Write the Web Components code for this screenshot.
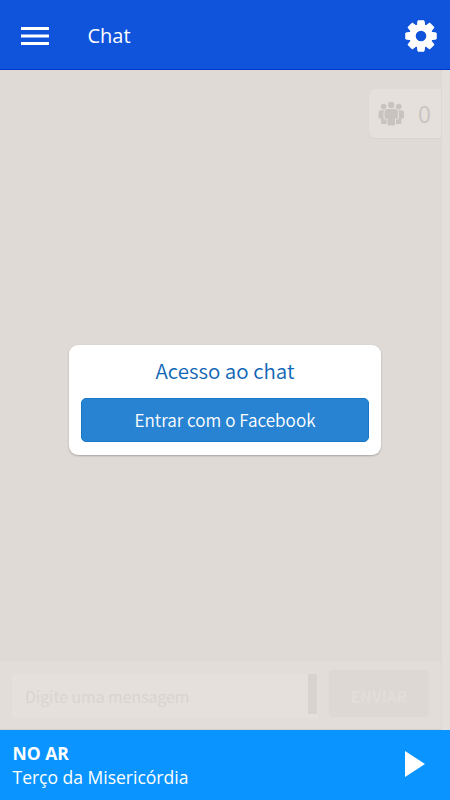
<!DOCTYPE html>
<html lang="pt-BR">

<head>
  <meta charset="UTF-8">
  <meta name="viewport" content="width=device-width, initial-scale=1.0">
  <title>Chat</title>
  <style>
    body {
      margin: 0;
      font-family: "Open Sans", sans-serif;
    }
  </style>
</head>

<body>
  <radio-app>
    <app-header slot="header">Chat</app-header>
    <chat-room slot="main">
      <online-count slot="count">0</online-count>
      <message-bar slot="bar" placeholder="Digite uma mensagem">ENVIAR</message-bar>
      <login-card slot="dialog" heading="Acesso ao chat">Entrar com o Facebook</login-card>
    </chat-room>
    <now-playing slot="footer" label="NO AR">Terço da Misericórdia</now-playing>
  </radio-app>

  <script>
    class BaseElement extends HTMLElement {
      constructor() {
        super();
        this.attachShadow({ mode: 'open' });
      }
      connectedCallback() {
        this.shadowRoot.innerHTML = `<style>${this.constructor.style}</style>${this.render()}`;
      }
    }

    class RadioApp extends BaseElement {
      static style = `
        :host {
          display: flex;
          flex-direction: column;
          height: 100vh;
          overflow: hidden;
        }
      `;
      render() {
        return `
          <slot name="header"></slot>
          <slot name="main"></slot>
          <slot name="footer"></slot>
        `;
      }
    }

    class AppHeader extends BaseElement {
      static style = `
        :host {
          display: flex;
          align-items: center;
          flex: none;
          box-sizing: border-box;
          height: 70px;
          padding: 2px 13px 0 21px;
          background: #0f54db;
          border-bottom: 1px solid #0034cf;
          color: #fff;
        }
        .menu {
          display: block;
          width: 28px;
          height: 20px;
        }
        .title {
          flex: 1;
          margin-left: 38.5px;
          font-size: 20px;
          line-height: 28px;
        }
        .gear {
          display: block;
          width: 32px;
          height: 32px;
        }
      `;
      gear() {
        // eight teeth around one ring
        let teeth = '';
        for (let i = 0; i < 8; i++) {
          teeth += `<path d="M-3-15.200h6l.8 5.700h-7.600z" transform="rotate(${i * 45})"/>`;
        }
        return `
          <svg class="gear" viewBox="-16 -16 32 32" fill="#fff" stroke="#fff" stroke-linejoin="round">
            ${teeth}
            <circle r="8.500" fill="none" stroke-width="6.400"/>
          </svg>
        `;
      }
      render() {
        return `
          <svg class="menu" viewBox="0 0 28 20" fill="#fff">
            <path d="M0 1h28v3H0zM0 8.500h28v3H0zM0 16h28v3H0z"/>
          </svg>
          <div class="title"><slot></slot></div>
          ${this.gear()}
        `;
      }
    }

    class ChatRoom extends BaseElement {
      static style = `
        :host {
          position: relative;
          display: flex;
          flex: 1;
          min-height: 0;
          background: #dfdad6;
          font-family: "Noto Sans CJK SC", sans-serif;
        }
        .room {
          display: flex;
          flex: 1;
          flex-direction: column;
          justify-content: space-between;
          align-items: flex-end;
          padding-top: 19px;
        }
        .track {
          width: 8px;
          border-left: 1px solid #ddd8d5;
          background: #e4dfdb;
        }
        .overlay {
          position: absolute;
          inset: 0;
          display: flex;
          align-items: center;
          justify-content: center;
        }
      `;
      render() {
        return `
          <div class="room">
            <slot name="count"></slot>
            <slot name="bar"></slot>
          </div>
          <div class="track"></div>
          <div class="overlay"><slot name="dialog"></slot></div>
        `;
      }
    }

    class OnlineCount extends BaseElement {
      static style = `
        :host {
          display: flex;
          align-items: center;
          box-sizing: border-box;
          width: 72px;
          height: 49px;
          padding-left: 9px;
          background: #e5e0dc;
          border-radius: 6px 0 0 6px;
          box-shadow: 0 1px 1px #d8d3cf;
          color: #c8c3bf;
          font-size: 23.5px;
          font-weight: 350;
          line-height: 47px;
        }
        svg {
          width: 27px;
          height: 26px;
          margin-right: 13px;
        }
        .value {
          margin-top: -1px;
        }
      `;
      render() {
        return `
          <svg viewBox="0 0 27 26" fill="#c8c3bf">
            <circle cx="13.200" cy="4" r="3.200"/>
            <circle cx="5.700" cy="5.600" r="2.800"/>
            <circle cx="20.700" cy="5.600" r="2.800"/>
            <path d="M9.500 8H17q3 0 3 3v5.500q0 1.200-1.500 1.200h-1.500V23q0 1.500-1.500 1.500h-4.500q-1.500 0-1.500-1.500v-5.300H8q-1.500 0-1.500-1.200V11q0-3 3-3z"/>
            <path d="M3 9.200h3.200q-.7 1-.7 2V17q0 1.300 1.500 1.500h1.500V23H4.500Q3 23 3 21.500V17.500H1.500Q.5 17.500.5 16.500V12Q.5 9.200 3 9.200z"/>
            <path d="M23.500 9.200h-3.200q.7 1 .7 2V17q0 1.300-1.500 1.500H18V23h4q1.500 0 1.500-1.500V17.500H25q1 0 1-1V12Q26 9.200 23.500 9.200z"/>
          </svg>
          <div class="value"><slot></slot></div>
        `;
      }
    }

    class MessageBar extends BaseElement {
      static style = `
        :host {
          display: flex;
          align-items: flex-start;
          align-self: stretch;
          gap: 12px;
          box-sizing: border-box;
          height: 69px;
          padding: 9px 12px 0;
          background: #e2ddd9;
          border-bottom: 1px solid #d2cdc5;
        }
        .field {
          display: flex;
          align-items: flex-start;
          flex: 1;
          height: 44px;
          margin-top: 4px;
          background: #e5e0dc;
          border-radius: 4px 0 0 4px;
        }
        .text {
          flex: 1;
          padding: 1px 0 0 13px;
          color: #d9d4d0;
          font-size: 15.8px;
          line-height: 44px;
        }
        .bar {
          width: 9px;
          height: 40px;
          margin-right: 1px;
          background: #d8d3cf;
        }
        .send {
          width: 100px;
          height: 47px;
          margin-left: -1px;
          background: #ddd8d4;
          border-radius: 4px;
          color: #e2ddd9;
          font-size: 15.5px;
          font-weight: 700;
          line-height: 52px;
          text-align: center;
        }
      `;
      render() {
        return `
          <div class="field">
            <div class="text">${this.getAttribute('placeholder')}</div>
            <div class="bar"></div>
          </div>
          <div class="send"><slot></slot></div>
        `;
      }
    }

    class LoginCard extends BaseElement {
      static style = `
        :host {
          display: block;
          box-sizing: border-box;
          width: 312px;
          height: 110px;
          margin-top: -1px;
          padding: 6.5px 12px 0;
          background: #fff;
          border-radius: 9px;
          box-shadow: 0 1px 2px #a9a5a2;
          font-weight: 350;
          text-align: center;
        }
        .heading {
          height: 47px;
          color: #1065b5;
          font-size: 20.5px;
          line-height: 39px;
        }
        .button {
          box-sizing: border-box;
          height: 44px;
          border: 1px solid #1a77c6;
          border-radius: 5px;
          background: #2983d3;
          color: #fff;
          font-size: 17.1px;
          line-height: 42px;
        }
      `;
      render() {
        return `
          <div class="heading">${this.getAttribute('heading')}</div>
          <div class="button"><slot></slot></div>
        `;
      }
    }

    class NowPlaying extends BaseElement {
      static style = `
        :host {
          display: flex;
          align-items: center;
          justify-content: space-between;
          flex: none;
          box-sizing: border-box;
          height: 70px;
          padding: 0 25px 1px 12.5px;
          background: #0994ff;
          color: #fff;
          font-size: 17.5px;
          line-height: 24px;
        }
        .label {
          font-weight: 700;
        }
        svg {
          width: 20px;
          height: 26px;
          margin-top: -1px;
        }
      `;
      render() {
        return `
          <div>
            <div class="label">${this.getAttribute('label')}</div>
            <div><slot></slot></div>
          </div>
          <svg viewBox="0 0 20 26" fill="#fff"><path d="M0 0l20 13L0 26z"/></svg>
        `;
      }
    }

    customElements.define('radio-app', RadioApp);
    customElements.define('app-header', AppHeader);
    customElements.define('chat-room', ChatRoom);
    customElements.define('online-count', OnlineCount);
    customElements.define('message-bar', MessageBar);
    customElements.define('login-card', LoginCard);
    customElements.define('now-playing', NowPlaying);
  </script>
</body>

</html>
